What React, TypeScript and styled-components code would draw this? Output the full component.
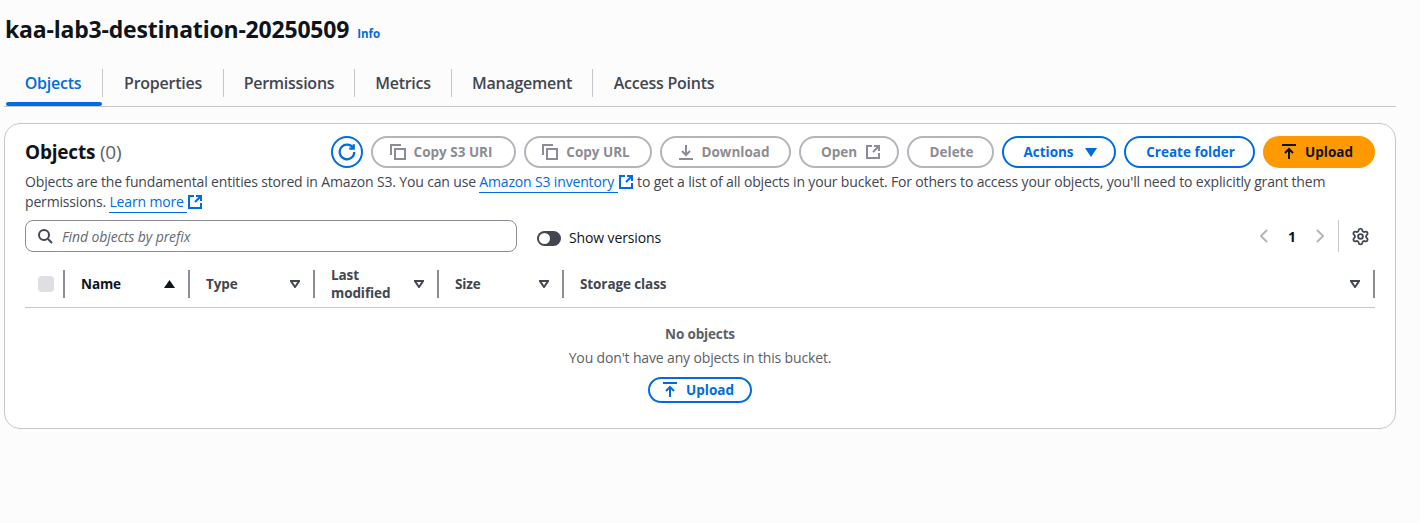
import styled, { createGlobalStyle } from "styled-components";
import { Settings } from "lucide-react";

const GlobalStyle = createGlobalStyle`
  html, body {
    margin: 0;
    background: #fcfcfc;
    color: #16191f;
    font-family: "Open Sans", "Noto Sans", sans-serif;
  }
`;

const Page = styled.main`
  width: 1396px;
  padding: 15px 0 0 4px;
  box-sizing: border-box;
`;

const Heading = styled.header`
  display: flex;
  align-items: flex-start;
  gap: 8px;
  height: 30px;
  padding-left: 1px;
`;

const Title = styled.h1`
  margin: 0;
  font-size: 23px;
  line-height: 28px;
  font-weight: 700;
  letter-spacing: -0.2px;
  color: #0f141a;
`;

const InfoLink = styled.a`
  margin-top: 11px;
  font-size: 11.5px;
  line-height: 16px;
  font-weight: 700;
  color: #006ce0;
`;

const Tabs = styled.nav`
  display: flex;
  height: 37px;
  margin-top: 24px;
  border-bottom: 1px solid #c6c6cd;
`;

const Tab = styled.div<{ $active?: boolean; $width: number; $last?: boolean }>`
  position: relative;
  box-sizing: border-box;
  width: ${(p) => p.$width}px;
  height: 28px;
  display: flex;
  align-items: center;
  justify-content: center;
  font-size: 16px;
  font-weight: 600;
  letter-spacing: -0.25px;
  color: ${(p) => (p.$active ? "#006ce0" : "#424650")};
  border-right: ${(p) => (p.$last ? "none" : "1px solid #c6c6cd")};

  ${(p) =>
    p.$active &&
    `
    &::after {
      content: "";
      position: absolute;
      left: 2px;
      right: 0;
      top: 33px;
      height: 4px;
      border-radius: 2px;
      background: #006ce0;
    }
  `}
`;

const Card = styled.section`
  box-sizing: border-box;
  height: 306px;
  margin-top: 16px;
  padding: 12px 20px 0 20px;
  background: #ffffff;
  border: 1px solid #c6c6cd;
  border-radius: 16px;
`;

const CardTop = styled.div`
  display: flex;
  align-items: center;
  justify-content: space-between;
  height: 32px;
`;

const CardTitle = styled.h2`
  margin: 0;
  font-size: 19px;
  font-weight: 700;
  letter-spacing: -0.2px;
  color: #0f141a;

  span {
    font-weight: 400;
    color: #5b6068;
  }
`;

const Actions = styled.div`
  display: flex;
  gap: 8px;
`;

// $nudge moves the content off centre: positive to the left, negative to the right
const Button = styled.button<{
  $variant?: "disabled" | "normal" | "primary";
  $width: number;
  $nudge?: number;
  $gap?: number;
}>`
  box-sizing: border-box;
  width: ${(p) => p.$width}px;
  height: 32px;
  padding: 0 ${(p) => Math.max(p.$nudge ?? 0, 0)}px 0 ${(p) => Math.max(-(p.$nudge ?? 0), 0)}px;
  display: flex;
  align-items: center;
  justify-content: center;
  gap: ${(p) => p.$gap ?? 8}px;
  border-radius: 16px;
  border: 2px solid
    ${(p) =>
      p.$variant === "primary" ? "#ff9900" : p.$variant === "disabled" ? "#b4b4bb" : "#006ce0"};
  background: ${(p) => (p.$variant === "primary" ? "#ff9900" : "#ffffff")};
  color: ${(p) =>
    p.$variant === "primary" ? "#0f141a" : p.$variant === "disabled" ? "#8c8c94" : "#006ce0"};
  font-family: inherit;
  font-size: 13.5px;
  font-weight: 700;
  letter-spacing: 0;
`;

const RoundButton = styled(Button)`
  border-radius: 50%;
`;

const Description = styled.p`
  margin: 4px 0 0;
  font-size: 14px;
  line-height: 20px;
  letter-spacing: -0.16px;
  color: #424650;
`;

const ExternalLink = styled.a`
  color: #006ce0;
  white-space: nowrap;

  svg {
    vertical-align: -3px;
  }
`;

const LinkText = styled.span`
  padding-bottom: 1px;
  border-bottom: 1px solid #006ce0;
`;

const FilterRow = styled.div`
  display: flex;
  align-items: center;
  height: 32px;
  margin-top: 8px;
`;

const Search = styled.div`
  box-sizing: border-box;
  width: 492px;
  height: 32px;
  display: flex;
  align-items: center;
  gap: 9px;
  padding-left: 11px;
  border: 1px solid #8c8c94;
  border-radius: 8px;
  background: #fff;
  font-size: 14px;
  font-style: italic;
  letter-spacing: -0.1px;
  color: #656871;
`;

const Toggle = styled.span`
  box-sizing: border-box;
  width: 24px;
  height: 15px;
  margin: 4px 8px 0 20px;
  padding: 2px;
  border-radius: 8px;
  background: #424650;

  &::before {
    content: "";
    display: block;
    width: 11px;
    height: 11px;
    border-radius: 50%;
    background: #fff;
  }
`;

const ToggleLabel = styled.span`
  margin-top: 2px;
  font-size: 14px;
  letter-spacing: -0.12px;
  color: #0f141a;
`;

const Pagination = styled.div`
  display: flex;
  align-items: center;
  margin-left: auto;
  height: 32px;
  padding-right: 5px;
`;

const PageNumber = styled.span`
  width: 40px;
  text-align: center;
  font-size: 14px;
  font-weight: 700;
  color: #0f141a;
`;

const PageDivider = styled.span`
  width: 1px;
  height: 32px;
  margin: 0 12px 0 10px;
  background: #c6c6cd;
`;

const TableHead = styled.div`
  display: grid;
  grid-template-columns: 38px 125px 125px 124px 125px 813px;
  height: 39px;
  margin-top: 16px;
  border-bottom: 1px solid #c6c6cd;
  align-items: start;
`;

const CheckCell = styled.div`
  height: 28px;
  margin-top: 2px;
  padding-left: 13px;
  display: flex;
  align-items: center;
`;

const Checkbox = styled.span`
  width: 16px;
  height: 16px;
  border-radius: 4px;
  background: #dedee3;
`;

const HeadCell = styled.div`
  box-sizing: border-box;
  height: 28px;
  margin-top: 2px;
  padding: 0 13px 0 16px;
  display: flex;
  align-items: center;
  justify-content: space-between;
  border-left: 2px solid #8c8c94;
  font-size: 13.5px;
  line-height: 18px;
  font-weight: 700;
  letter-spacing: -0.1px;
  color: #424650;

  &:last-child {
    border-right: 2px solid #8c8c94;
  }
`;

const HeadLabel = styled.span<{ $dark?: boolean }>`
  white-space: pre-line;
  color: ${(p) => (p.$dark ? "#0f141a" : "#424650")};
`;

const Empty = styled.div`
  display: flex;
  flex-direction: column;
  align-items: center;
  margin-top: 16px;
  color: #5b6068;
  font-size: 14px;
  line-height: 20px;
  letter-spacing: -0.15px;
`;

const EmptyTitle = styled.strong`
  font-size: 13.5px;
  font-weight: 700;
`;

const EmptyText = styled.span`
  margin-top: 4px;
`;

const SmallButton = styled(Button)`
  height: 26px;
  margin-top: 9px;
  border-radius: 13px;
`;

const Icon = styled.svg`
  flex: none;
  fill: none;
  stroke: currentColor;
  stroke-width: 2;
`;

const CopyIcon = () => (
  <Icon width="16" height="16" viewBox="0 0 16 16">
    <path d="M1 11V1h10" />
    <path d="M5 5h10v10H5z" />
  </Icon>
);

const DownloadIcon = () => (
  <Icon width="16" height="16" viewBox="0 0 16 16">
    <path d="M1 15h14M8 1v9M4 7l4 4 4-4" />
  </Icon>
);

const ExternalIcon = () => (
  <Icon width="16" height="16" viewBox="0 0 16 16">
    <path d="M7 2H2v12h12V9" />
    <path d="M9 2h5v5M14 2 8 8" />
  </Icon>
);

const UploadIcon = () => (
  <Icon width="16" height="16" viewBox="0 0 16 16">
    <path d="M1 1h14M8 15V5M4 9l4-4 4 4" />
  </Icon>
);

const RefreshIcon = () => (
  <Icon width="18" height="18" viewBox="0 0 16 16">
    <path d="M13.5 4.5A6.5 6.5 0 1 0 14.5 8" />
    <path d="M14 1v4h-4" />
  </Icon>
);

const SearchIcon = () => (
  <Icon width="16" height="16" viewBox="0 0 16 16" style={{ color: "#424650" }}>
    <circle cx="7" cy="7" r="5" />
    <path d="m11 11 4 4" />
  </Icon>
);

const ChevronIcon = ({ right }: { right?: boolean }) => (
  <Icon width="16" height="16" viewBox="0 0 16 16" style={{ color: "#b4b4bb" }}>
    <path d={right ? "m5 2 6 6-6 6" : "m11 2-6 6 6 6"} />
  </Icon>
);

const CaretDown = () => (
  <svg width="12" height="9" viewBox="0 0 12 9" fill="currentColor">
    <path d="M0 0h12L6 9z" />
  </svg>
);

const SortDown = () => (
  <svg width="10" height="8" viewBox="0 0 10 8" fill="#424650" fillRule="evenodd">
    <path d="M0 0h10v1.500L5.500 8h-1L0 1.500zM2.800 2 5 5.400 7.200 2z" />
  </svg>
);

const SortUp = () => (
  <svg width="11" height="8" viewBox="0 0 11 8" fill="#0f141a">
    <path d="M5.500 0 11 8H0z" />
  </svg>
);

const columns = [
  { label: "Type" },
  { label: "Last\nmodified" },
  { label: "Size" },
  { label: "Storage class" },
];

export default function App() {
  return (
    <Page>
      <GlobalStyle />
      <Heading>
        <Title>kaa-lab3-destination-20250509</Title>
        <InfoLink>Info</InfoLink>
      </Heading>
      <Tabs>
        <Tab $active $width={99}>Objects</Tab>
        <Tab $width={121}>Properties</Tab>
        <Tab $width={131}>Permissions</Tab>
        <Tab $width={97}>Metrics</Tab>
        <Tab $width={141}>Management</Tab>
        <Tab $width={142} $last>Access Points</Tab>
      </Tabs>
      <Card>
        <CardTop>
          <CardTitle>
            Objects <span>(0)</span>
          </CardTitle>
          <Actions>
            <RoundButton $width={32} aria-label="Refresh">
              <RefreshIcon />
            </RoundButton>
            <Button $variant="disabled" $width={145} $nudge={5}>
              <CopyIcon />
              Copy S3 URI
            </Button>
            <Button $variant="disabled" $width={128} $nudge={4}>
              <CopyIcon />
              Copy URL
            </Button>
            <Button $variant="disabled" $width={131} $nudge={4}>
              <DownloadIcon />
              Download
            </Button>
            <Button $variant="disabled" $width={100} $nudge={-4}>
              Open
              <ExternalIcon />
            </Button>
            <Button $variant="disabled" $width={87} $nudge={-2}>Delete</Button>
            <Button $width={114} $gap={11} $nudge={-2}>
              Actions
              <CaretDown />
            </Button>
            <Button $width={131} $nudge={-2}>Create folder</Button>
            <Button $variant="primary" $width={112} $nudge={4}>
              <UploadIcon />
              Upload
            </Button>
          </Actions>
        </CardTop>
        <Description>
          Objects are the fundamental entities stored in Amazon S3. You can use{" "}
          <ExternalLink>
            <LinkText>Amazon S3 inventory </LinkText>
            <ExternalIcon />
          </ExternalLink>{" "}
          to get a list of all objects in your bucket. For others to access your objects, you'll
          need to explicitly grant them
          <br />
          permissions.{" "}
          <ExternalLink>
            <LinkText>Learn more </LinkText>
            <ExternalIcon />
          </ExternalLink>
        </Description>
        <FilterRow>
          <Search>
            <SearchIcon />
            Find objects by prefix
          </Search>
          <Toggle />
          <ToggleLabel>Show versions</ToggleLabel>
          <Pagination>
            <ChevronIcon />
            <PageNumber>1</PageNumber>
            <ChevronIcon right />
            <PageDivider />
            <Settings size={19} color="#424650" strokeWidth={2.3} />
          </Pagination>
        </FilterRow>
        <TableHead>
          <CheckCell>
            <Checkbox />
          </CheckCell>
          <HeadCell>
            <HeadLabel $dark>Name</HeadLabel>
            <SortUp />
          </HeadCell>
          {columns.map((c) => (
            <HeadCell key={c.label}>
              <HeadLabel>{c.label}</HeadLabel>
              <SortDown />
            </HeadCell>
          ))}
        </TableHead>
        <Empty>
          <EmptyTitle>No objects</EmptyTitle>
          <EmptyText>You don't have any objects in this bucket.</EmptyText>
          <SmallButton $width={104} $nudge={4}>
            <UploadIcon />
            Upload
          </SmallButton>
        </Empty>
      </Card>
    </Page>
  );
}
